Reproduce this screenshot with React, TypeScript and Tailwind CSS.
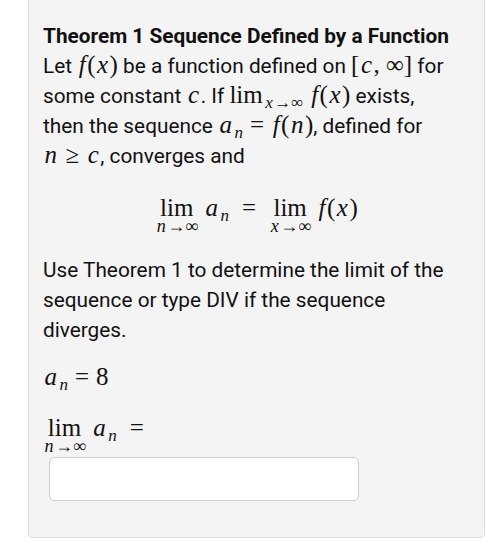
const mathFont = "font-[Liberation_Serif,Times_New_Roman,serif]";

function I({ children }: { children: React.ReactNode }) {
  return <span className="italic px-[1.5px]">{children}</span>;
}

function Sub({ children }: { children: React.ReactNode }) {
  return <span className="italic text-[17px] relative top-[5px] ml-[1px]">{children}</span>;
}

function Rel({ sym }: { sym: string }) {
  return <span className="mx-[7px]">{sym}</span>;
}

// inline math span
function M({ children }: { children: React.ReactNode }) {
  return <span className={`${mathFont} text-[25px] leading-none`}>{children}</span>;
}

function Lim({ v }: { v: string }) {
  return (
    <span className="inline-flex flex-col items-center leading-none align-baseline">
      <span className="leading-none">lim</span>
      <span className="text-[18px] leading-none mt-[-3px]">
        <I>{v}</I>→∞
      </span>
    </span>
  );
}

export default function App() {
  return (
    <div className="min-h-screen bg-white font-['Roboto',sans-serif] text-[#111]">
      <div className="ml-[28px] w-[457px] bg-[#f4f4f4] border border-t-0 border-[#dcdcdc] rounded-b-[5px] px-[14px] pt-[21px] pb-[36px]">
        <div className="text-[20.8px] leading-[30px] whitespace-nowrap">
          <div className="font-bold">Theorem 1 Sequence Defined by a Function</div>
          <div>
            Let{' '}
            <M>
              <I>f</I>(<I>x</I>)
            </M>{' '}
            be a function defined on{' '}
            <M>
              [<I>c</I>, ∞]
            </M>{' '}
            for
          </div>
          <div>
            some constant <M><I>c</I></M>. If{' '}
            <M>
              lim
              <span className="text-[17px] relative top-[5px] ml-[1px]">
                <I>x</I>→∞
              </span>{' '}
              <I>f</I>(<I>x</I>)
            </M>{' '}
            exists,
          </div>
          <div>
            then the sequence{' '}
            <M>
              <I>a</I>
              <Sub>n</Sub>
              <Rel sym="=" />
              <I>f</I>(<I>n</I>)
            </M>
            , defined for
          </div>
          <div>
            <M>
              <I>n</I>
              <Rel sym="≥" />
              <I>c</I>
            </M>
            , converges and
          </div>
        </div>

        <div className={`${mathFont} text-[25px] flex justify-center items-baseline gap-[6px] pt-[18px] pb-[20px]`}>
          <Lim v="n" />
          <span>
            <I>a</I>
            <Sub>n</Sub>
          </span>
          <Rel sym="=" />
          <Lim v="x" />
          <span>
            <I>f</I>(<I>x</I>)
          </span>
        </div>

        <p className="text-[20.8px] leading-[30px]">
          Use Theorem 1 to determine the limit of the sequence or type DIV if the sequence diverges.
        </p>

        <div className={`${mathFont} text-[25px] leading-[30px] mt-[17px]`}>
          <I>a</I>
          <Sub>n</Sub>
          <Rel sym="=" />8
        </div>

        <div className={`${mathFont} text-[25px] flex items-baseline gap-[6px] mt-[14px]`}>
          <Lim v="n" />
          <span>
            <I>a</I>
            <Sub>n</Sub>
          </span>
          <Rel sym="=" />
        </div>

        <div className="ml-[6px] mt-[2px] w-[310px] h-[44px] bg-white border border-[#cfcfcf] rounded-[5px]" />
      </div>
    </div>
  );
}
